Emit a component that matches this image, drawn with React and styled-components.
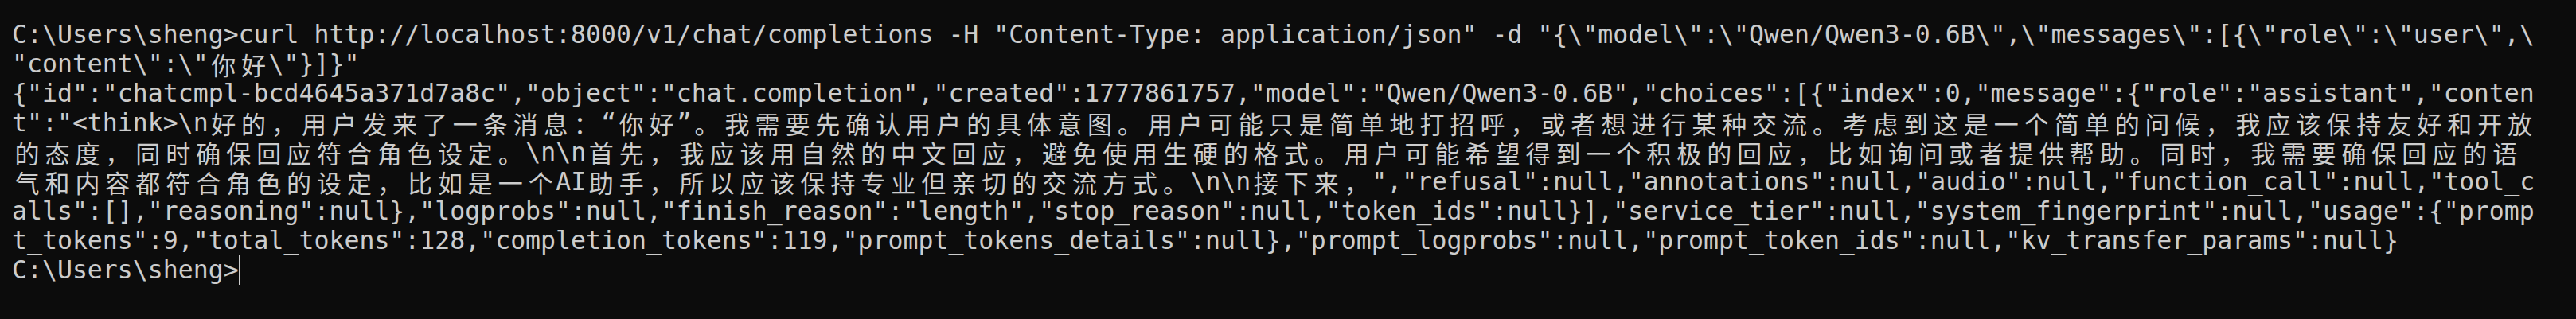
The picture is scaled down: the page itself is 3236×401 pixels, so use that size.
import React from "react";
import styled, { createGlobalStyle } from "styled-components";

const CELL = 18.98;
const CJK_SIZE = 31;

const GlobalStyle = createGlobalStyle`
  html, body {
    margin: 0;
    padding: 0;
    background: #0c0c0c;
  }
  body {
    width: 3236px;
    height: 401px;
    overflow: hidden;
  }
`;

const Terminal = styled.div`
  width: 3236px;
  height: 401px;
  box-sizing: border-box;
  padding: 25px 0 0 15px;
  background: #0c0c0c;
  color: #cccccc;
  display: flex;
  flex-direction: column;
`;

const Line = styled.div`
  height: 37px;
  line-height: 37px;
  white-space: pre;
  display: flex;
  align-items: center;
`;

// ascii run: monospace advance = one cell
const Narrow = styled.span`
  flex: none;
  font-family: "DejaVu Sans Mono", "Liberation Mono", monospace;
  font-size: ${CELL / 0.60205}px;
`;

// CJK run: every glyph takes two cells, centred
const Wide = styled.span`
  flex: none;
  font-family: "Noto Sans CJK SC", "DejaVu Sans Mono", sans-serif;
  font-size: ${CJK_SIZE}px;
  letter-spacing: ${CELL * 2 - CJK_SIZE}px;
  padding-left: ${(CELL * 2 - CJK_SIZE) / 2}px;
  margin-right: -${(CELL * 2 - CJK_SIZE) / 2}px;
`;

const Cursor = styled.span`
  flex: none;
  width: 2px;
  height: 37px;
  background: #cccccc;
`;

const WIDE = /[\u1100-\u115f\u2e80-\ua4cf\uac00-\ud7a3\uf900-\ufaff\ufe30-\ufe4f\uff00-\uff60\uffe0-\uffe6]/;

const lines = [
  'C:\\Users\\sheng>curl http://localhost:8000/v1/chat/completions -H "Content-Type: application/json" -d "{\\"model\\":\\"Qwen/Qwen3-0.6B\\",\\"messages\\":[{\\"role\\":\\"user\\",\\',
  '"content\\":\\"你好\\"}]}"',
  '{"id":"chatcmpl-bcd4645a371d7a8c","object":"chat.completion","created":1777861757,"model":"Qwen/Qwen3-0.6B","choices":[{"index":0,"message":{"role":"assistant","conten',
  't":"<think>\\n好的，用户发来了一条消息：“你好”。我需要先确认用户的具体意图。用户可能只是简单地打招呼，或者想进行某种交流。考虑到这是一个简单的问候，我应该保持友好和开放',
  '的态度，同时确保回应符合角色设定。\\n\\n首先，我应该用自然的中文回应，避免使用生硬的格式。用户可能希望得到一个积极的回应，比如询问或者提供帮助。同时，我需要确保回应的语',
  '气和内容都符合角色的设定，比如是一个AI助手，所以应该保持专业但亲切的交流方式。\\n\\n接下来，","refusal":null,"annotations":null,"audio":null,"function_call":null,"tool_c',
  'alls":[],"reasoning":null},"logprobs":null,"finish_reason":"length","stop_reason":null,"token_ids":null}],"service_tier":null,"system_fingerprint":null,"usage":{"promp',
  't_tokens":9,"total_tokens":128,"completion_tokens":119,"prompt_tokens_details":null},"prompt_logprobs":null,"prompt_token_ids":null,"kv_transfer_params":null}',
];

// split a line into runs of narrow and wide characters
function toRuns(text) {
  const runs = [];
  for (const ch of Array.from(text)) {
    const wide = WIDE.test(ch);
    const last = runs[runs.length - 1];
    if (last && last.wide === wide) last.text += ch;
    else runs.push({ wide, text: ch });
  }
  return runs;
}

function TermLine({ text, cursor }) {
  return (
    <Line>
      {toRuns(text).map((r, i) =>
        r.wide ? <Wide key={i}>{r.text}</Wide> : <Narrow key={i}>{r.text}</Narrow>
      )}
      {cursor && <Cursor />}
    </Line>
  );
}

export default function App() {
  return (
    <>
      <GlobalStyle />
      <Terminal>
        {lines.map((l, i) => (
          <TermLine key={i} text={l} />
        ))}
        <TermLine text={"C:\\Users\\sheng>"} cursor />
      </Terminal>
    </>
  );
}
